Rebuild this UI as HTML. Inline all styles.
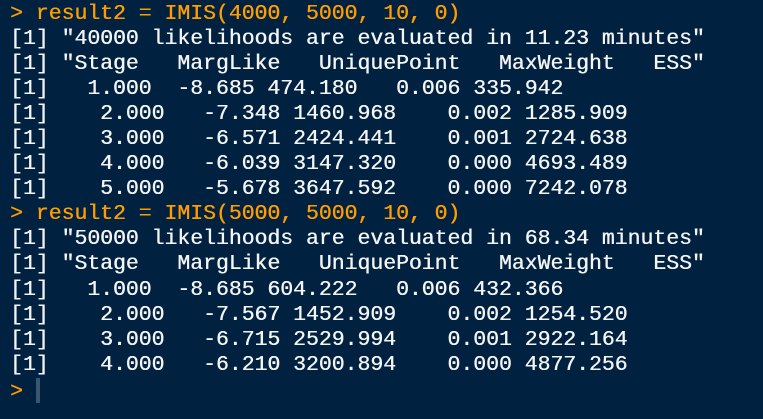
<!DOCTYPE html>
<html><head><meta charset="utf-8"><style>
html,body{margin:0;padding:0;background:#002240;width:763px;height:419px;overflow:hidden}
pre{margin:0;position:absolute;left:10px;top:2px;font-family:"Liberation Mono",monospace;font-size:21.45px;line-height:25.05px;color:#f4f4f4;white-space:pre;text-shadow:0.4px 0 0 currentColor}
.o{color:#ff9d00}
.c{display:inline-block;width:4px;height:25px;background:#3b5472;vertical-align:-6px;margin-left:0px}
</style></head><body><pre><span class="o">&gt; result2 = IMIS(4000, 5000, 10, 0)</span>
[1] "40000 likelihoods are evaluated in 11.23 minutes"
[1] "Stage   MargLike   UniquePoint   MaxWeight   ESS"
[1]   1.000  -8.685 474.180   0.006 335.942
[1]    2.000   -7.348 1460.968    0.002 1285.909
[1]    3.000   -6.571 2424.441    0.001 2724.638
[1]    4.000   -6.039 3147.320    0.000 4693.489
[1]    5.000   -5.678 3647.592    0.000 7242.078
<span class="o">&gt; result2 = IMIS(5000, 5000, 10, 0)</span>
[1] "50000 likelihoods are evaluated in 68.34 minutes"
[1] "Stage   MargLike   UniquePoint   MaxWeight   ESS"
[1]   1.000  -8.685 604.222   0.006 432.366
[1]    2.000   -7.567 1452.909    0.002 1254.520
[1]    3.000   -6.715 2529.994    0.001 2922.164
[1]    4.000   -6.210 3200.894    0.000 4877.256
<span class="o">&gt; </span><span class="c"></span></pre></body></html>
